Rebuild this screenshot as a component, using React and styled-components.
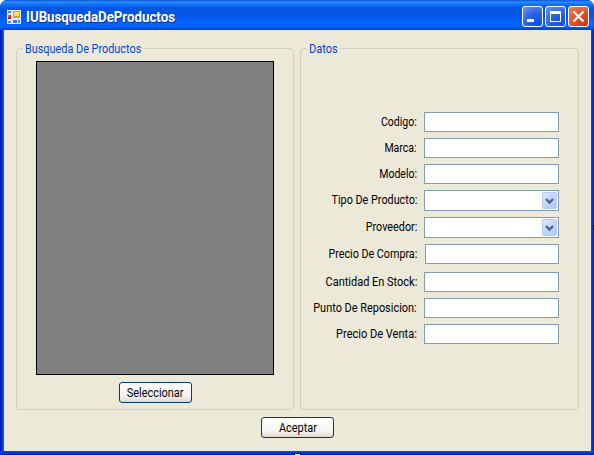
import React from "react";
import styled, { createGlobalStyle } from "styled-components";

const Global = createGlobalStyle`
  *{box-sizing:border-box}
  html,body{margin:0;padding:0;overflow:hidden;background:#fff}
  button,input{font:inherit;margin:0}
`;

const Window = styled.div`
  position: relative;
  width: 594px;
  height: 455px;
  display: flex;
  flex-direction: column;
  overflow: hidden;
  border-radius: 7px 7px 0 0;
  background: #0046e0;
  color: #000;
  font: 12px/14px Roboto, "Liberation Sans", sans-serif;
`;

const TitleBar = styled.header`
  flex: none;
  height: 30px;
  display: flex;
  align-items: center;
  padding: 3px 5px 0 7px;
  background: linear-gradient(#0a50d0 0, #2a8dff 2px, #1275f8 4px, #0558e6 8px, #0054e3 14px, #0062fb 21px, #0066ff 26px, #0055e5 28px, #0040c0 30px);
`;

const Title = styled.h1`
  flex: 1;
  margin: 1px 0 0 5px;
  color: #fff;
  font-size: 14px;
  line-height: 16px;
  font-weight: 700;
  white-space: nowrap;
  transform: scaleX(0.948);
  transform-origin: 0 50%;
  text-shadow: 1px 1px 0 #0a2f8c;
`;

const Controls = styled.div`
  display: flex;
  gap: 2px;
  height: 21px;
`;

const ControlButton = styled.button`
  width: 21px;
  height: 21px;
  padding: 0;
  border: 1px solid #fff;
  border-radius: 3px;
  background: ${(p) =>
    p.$close
      ? "radial-gradient(circle at 80% 90%, #cc3a0c 0, #e0502a 50%, #ea8668 100%)"
      : "radial-gradient(circle at 80% 90%, #0a52e8 0, #2b62e0 50%, #6f97f0 100%)"};
  svg { display: block; }
`;

const Frame = styled.div`
  flex: 1;
  display: flex;
  padding: 0 3px 4px 4px;
  background:
    linear-gradient(#0046e8 0 1px, #0038d0 2px, #001a9c 4px) 0 100% / 100% 4px no-repeat,
    linear-gradient(90deg, #0018b8 0 1px, #0034d8 2px, #1062f0 3px, #0c54e4 4px) 0 0 / 4px 100% no-repeat,
    linear-gradient(90deg, #0048e8 0 1px, #0030d0 2px, #001698 3px) 100% 0 / 3px 100% no-repeat;
`;

const Client = styled.main`
  flex: 1;
  display: flex;
  flex-direction: column;
  align-items: flex-start;
  padding: 18px 12px 0;
  background: #ece9d8;
`;

const Groups = styled.div`
  display: flex;
  gap: 6px;
`;

const Group = styled.section`
  width: ${(p) => p.$width}px;
  height: 362px;
  display: flex;
  flex-direction: column;
  border: 1px solid #d0d0bf;
  border-radius: 4px;
`;

const Legend = styled.h2`
  width: ${(p) => p.$width}px;
  margin: -7px 0 0 6px;
  padding: 0 2px;
  height: 14px;
  background: #ece9d8;
  color: #0046d5;
  font-size: 12px;
  line-height: 14px;
  font-weight: 400;
`;

/* Condenses the interface face to the narrow widths of the form's labels. */
const Narrow = styled.span`
  display: inline-block;
  white-space: nowrap;
  transform: scaleX(${(p) => p.$scale});
  transform-origin: ${(p) => p.$origin || "0"} 50%;
`;

const ResultsGrid = styled.div`
  width: 238px;
  height: 314px;
  margin: 5px 0 7px 19px;
  border: 1px solid #000;
  background: #808080;
`;

const PushButton = styled.button`
  width: 73px;
  height: 21px;
  margin-left: ${(p) => p.$left}px;
  margin-top: ${(p) => p.$top || 0}px;
  padding: 1px 0 0;
  border: 1px solid #003c74;
  border-radius: 3px;
  background: linear-gradient(#fff, #f4f3ee 70%, #dcd7cb);
  color: #000;
  line-height: 18px;
`;

const Form = styled.form`
  display: flex;
  flex-direction: column;
  margin-top: 56px;
`;

const Row = styled.label`
  display: flex;
  justify-content: flex-end;
  align-items: flex-start;
  width: 258px;
  margin-bottom: ${(p) => p.$gap}px;
`;

const Caption = styled(Narrow)`
  margin: 3px ${(p) => (p.$inset ? 8 : 7)}px 0 0;
`;

const TextBox = styled.input`
  width: ${(p) => (p.$inset ? 134 : 135)}px;
  height: 20px;
  padding: 0 3px;
  border: 1px solid #7f9db9;
  border-radius: 0;
  background: #fff;
  outline: none;
`;

const Combo = styled.span`
  display: flex;
  justify-content: flex-end;
  width: 135px;
  height: 21px;
  padding: 1px;
  border: 1px solid #7f9db9;
  background: #fff;
`;

const DropButton = styled.span`
  width: 15px;
  height: 17px;
  border: 1px solid #b7caf5;
  border-radius: 2px;
  background: linear-gradient(135deg, #dfe8ff, #c3d3fd 50%, #b0c8f8);
  svg { display: block; }
`;

const BottomHandle = styled.i`
  position: absolute;
  left: 294px;
  bottom: 0;
  width: 7px;
  height: 2px;
  border: 1px solid #000;
  border-bottom: 0;
  background: #fff;
`;

const RightHandle = styled.i`
  position: absolute;
  right: 0;
  top: 225px;
  width: 1px;
  height: 5px;
  background: #000;
`;

const fields = [
  { label: "Codigo:", gap: 6, scale: 0.88 },
  { label: "Marca:", gap: 6, scale: 0.88 },
  { label: "Modelo:", gap: 6, scale: 0.88 },
  { label: "Tipo De Producto:", gap: 6, scale: 0.9, combo: true },
  { label: "Proveedor:", gap: 6, scale: 0.9, combo: true },
  { label: "Precio De Compra:", gap: 8, scale: 0.895, inset: true },
  { label: "Cantidad En Stock:", gap: 6, scale: 0.915 },
  { label: "Punto De Reposicion:", gap: 6, scale: 0.91 },
  { label: "Precio De Venta:", gap: 0, scale: 0.92 },
];

const AppIcon = () => (
  <svg width="14" height="14" viewBox="0 0 14 14" shapeRendering="crispEdges">
    <path fill="#e4ebf7" d="M0 0h14v14H0z" />
    <path fill="#5c86c8" d="M1 1h3v2H1zM1 11h3v2H1zM11 10h2v3h-2z" />
    <path fill="#b81c28" d="M1 5h3v4H1z" />
    <path fill="#e46058" d="M1 5h2v2H1z" />
    <path fill="#e0a020" d="M6 1h7v7H6z" />
    <path fill="#ffdc70" d="M7 2h5v4H7z" />
    <path fill="#3c78e8" d="M6 10h4v3H6z" />
  </svg>
);

const Chevron = () => (
  <svg width="13" height="15" viewBox="0 0 13 15">
    <path d="M3 6l3.5 3.5L10 6" fill="none" stroke="#4d6185" strokeWidth="2.3" />
  </svg>
);

export default function App() {
  return (
    <>
      <Global />
      <Window>
        <TitleBar>
          <AppIcon />
          <Title>IUBusquedaDeProductos</Title>
          <Controls>
            <ControlButton aria-label="Minimizar">
              <svg width="19" height="19"><path fill="#fff" d="M4 12h7v3H4z" /></svg>
            </ControlButton>
            <ControlButton aria-label="Maximizar">
              <svg width="19" height="19"><path fill="#fff" fillRule="evenodd" d="M4 4h11v11H4zM5 7v7h9V7z" /></svg>
            </ControlButton>
            <ControlButton $close aria-label="Cerrar">
              <svg width="19" height="19"><path stroke="#fff" strokeWidth="2.3" d="M4.5 4.5l10 10M14.5 4.5l-10 10" /></svg>
            </ControlButton>
          </Controls>
        </TitleBar>
        <Frame>
          <Client>
            <Groups>
              <Group $width={278}>
                <Legend $width={120}><Narrow $scale={0.905}>Busqueda De Productos</Narrow></Legend>
                <ResultsGrid />
                <PushButton $left={102}><Narrow $scale={0.91} $origin="50%">Seleccionar</Narrow></PushButton>
              </Group>
              <Group $width={279}>
                <Legend $width={33}><Narrow $scale={0.92}>Datos</Narrow></Legend>
                <Form>
                  {fields.map((f) => (
                    <Row key={f.label} $gap={f.gap}>
                      <Caption $scale={f.scale} $origin="100%" $inset={f.inset}>{f.label}</Caption>
                      {f.combo ? (
                        <Combo><DropButton><Chevron /></DropButton></Combo>
                      ) : (
                        <TextBox $inset={f.inset} />
                      )}
                    </Row>
                  ))}
                </Form>
              </Group>
            </Groups>
            <PushButton $left={245} $top={7}><Narrow $scale={0.91} $origin="50%">Aceptar</Narrow></PushButton>
          </Client>
        </Frame>
        <BottomHandle />
        <RightHandle />
      </Window>
    </>
  );
}
